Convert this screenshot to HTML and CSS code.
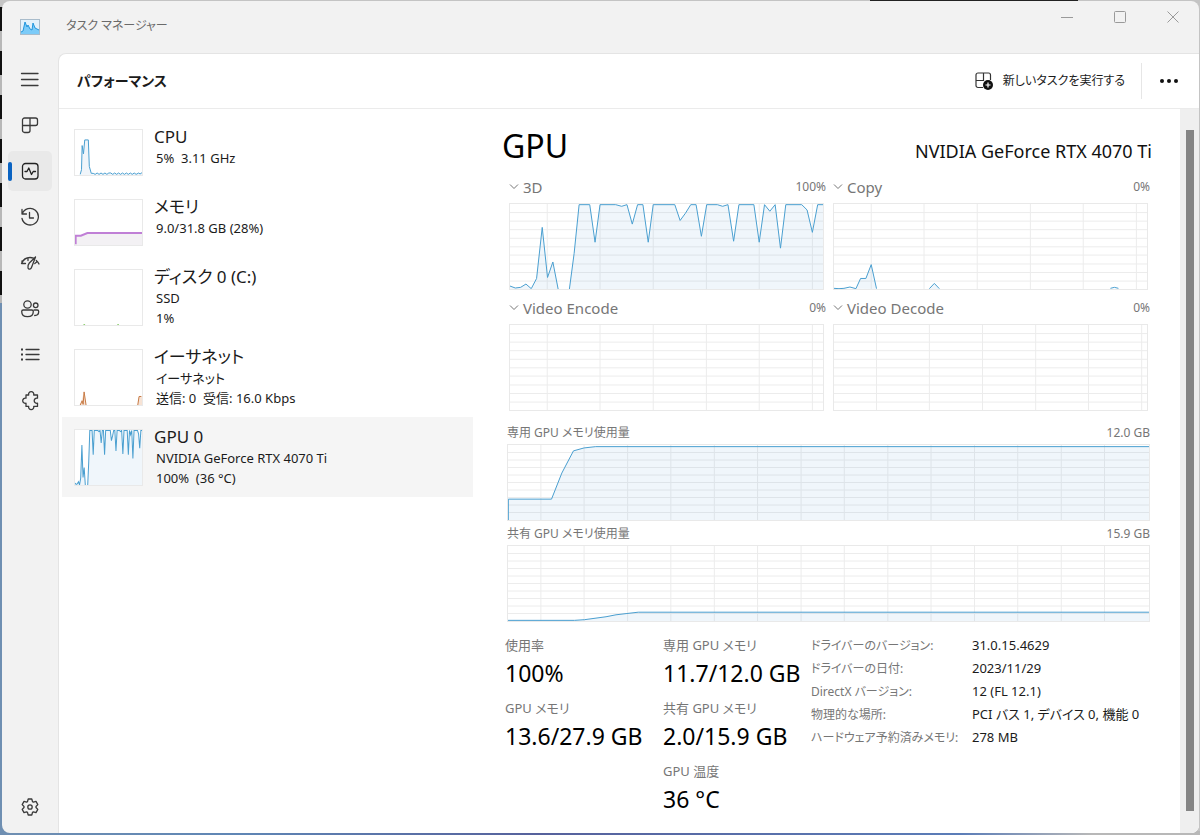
FILE: index.html
```html
<!DOCTYPE html>
<html lang="ja">
<head>
<meta charset="utf-8">
<meta name="viewport" content="width=device-width, initial-scale=1">
<title>タスク マネージャー</title>
<link rel="stylesheet" href="styles.css">
</head>
<body>
<div class="window">
  <header class="titlebar">
    <svg class="app-icon" viewBox="0 0 20 16" aria-hidden="true">
      <rect x="0.5" y="0.5" width="19" height="15" fill="#e3f1fb" stroke="#a9bccb"/>
      <path d="M1 13L3 12L5 3L7 8L8 6L10 10L12 11L13 4L15 9L17 10L19 11V15H1Z" fill="#7ccbf8"/>
      <path d="M1 13L3 12L5 3L7 8L8 6L10 10L12 11L13 4L15 9L17 10L19 11" fill="none" stroke="#2196dd"/>
    </svg>
    <h1 class="app-title">タスク マネージャー</h1>
    <div class="window-buttons">
      <button type="button" class="window-button" aria-label="最小化"><svg viewBox="0 0 12 12"><path d="M0 6.5H12"/></svg></button>
      <button type="button" class="window-button" aria-label="最大化"><svg viewBox="0 0 12 12"><rect x="0.5" y="0.5" width="11" height="11" rx="1"/></svg></button>
      <button type="button" class="window-button" aria-label="閉じる"><svg viewBox="0 0 12 12"><path d="M0.5 0.5L11.5 11.5M11.5 0.5L0.5 11.5"/></svg></button>
    </div>
  </header>

  <div class="body">
    <nav class="rail" aria-label="ページ">
      <button type="button" class="rail-button" aria-label="メニュー"><svg viewBox="0 0 20 20"><path d="M1.5 4.5H18M1.5 10.5H18M1.5 16.5H18"/></svg></button>
      <button type="button" class="rail-button" aria-label="プロセス"><svg viewBox="0 0 20 20"><path d="M4.500 3H15.500a2 2 0 0 1 2 2V8.500a2 2 0 0 1-2 2H10V15.500a2 2 0 0 1-2 2H4.500a2 2 0 0 1-2-2V5a2 2 0 0 1 2-2zM10 3V10.500H2.500"/></svg></button>
      <button type="button" class="rail-button selected" aria-label="パフォーマンス" aria-current="page"><svg viewBox="0 0 20 20"><rect x="2.500" y="2.500" width="15.500" height="15.500" rx="3"/><path d="M5 10.500H7L8.800 7L11.500 13.500L13.200 10.500H15.500"/></svg></button>
      <button type="button" class="rail-button" aria-label="アプリの履歴"><svg viewBox="0 0 20 20"><path d="M2 2.500V7H6.500M2.300 6.800A8.300 8.300 0 1 1 2 11.500M9.500 5.500V11H13.500"/></svg></button>
      <button type="button" class="rail-button" aria-label="スタートアップ アプリ"><svg viewBox="0 0 20 20"><path d="M1.500 10.500C3 7 6 4.500 10 4.500C11.500 4.500 12.500 4.800 13.500 5.200M2 8V10.500H5.500M8 4.800V7.500M16.300 7.500C17.500 8.500 18.300 9.500 19 11M14.800 10.500L17 8.800"/><path d="M15.500 4L9.300 10C8 11.500 7.800 13.500 8 15C8.800 17 11 16.300 11.600 14.300L15.500 4"/></svg></button>
      <button type="button" class="rail-button" aria-label="ユーザー"><svg viewBox="0 0 20 20"><circle cx="7.500" cy="5.500" r="3.700"/><circle cx="15.700" cy="6.300" r="2.300"/><path d="M3.200 11H11.800a1.500 1.500 0 0 1 1.500 1.500c0 3.200-2.400 5.200-5.800 5.200S1.700 15.700 1.700 12.500a1.500 1.500 0 0 1 1.500-1.500zM14.200 11h3a1.500 1.500 0 0 1 1.500 1.500c0 2.500-1.400 4-4 4"/></svg></button>
      <button type="button" class="rail-button" aria-label="詳細"><svg viewBox="0 0 20 20"><path d="M6 4.500H19M6 9.500H19M6 14.500H19"/><path class="thick" d="M1 4.500H3M1 9.500H3M1 14.500H3"/></svg></button>
      <button type="button" class="rail-button" aria-label="サービス"><svg viewBox="0 0 20 20"><path d="M6 4H8.700a2.600 2.600 0 1 1 5 0H17.500V7.200a2.600 2.600 0 1 0 0 5V15.400H13.700a2.600 2.600 0 1 1-5 0H6V12.200a2.600 2.600 0 1 1 0-5z"/></svg></button>
      <button type="button" class="rail-button settings" aria-label="設定"><svg viewBox="0 0 20 20"><path d="M8.200 2H11.800L12.500 4.600L13.400 5.100L16 4.400L17.800 7.600L16 9.500V10.500L17.800 12.400L16 15.600L13.400 14.900L12.500 15.400L11.800 18H8.200L7.500 15.400L6.600 14.900L4 15.600L2.200 12.400L4 10.500V9.500L2.200 7.600L4 4.400L6.600 5.100L7.500 4.600Z"/><circle cx="10" cy="10" r="2.200"/></svg></button>
    </nav>

    <main class="panel">
      <div class="toolbar">
        <h2 class="page-title">パフォーマンス</h2>
        <button type="button" class="run-task">
          <svg viewBox="0 0 20 20" aria-hidden="true"><path d="M9 16.500H4a2 2 0 0 1-2-2V4a2 2 0 0 1 2-2H14.500a2 2 0 0 1 2 2V9M2 9.500H9.500V2"/><circle class="solid" cx="14" cy="14" r="5"/><path class="plus" d="M14 11.500V16.500M11.500 14H16.500"/></svg>
          <span>新しいタスクを実行する</span>
        </button>
        <button type="button" class="more" aria-label="その他"><svg viewBox="0 0 20 6" aria-hidden="true"><circle cx="3" cy="3" r="2"/><circle cx="10" cy="3" r="2"/><circle cx="17" cy="3" r="2"/></svg></button>
      </div>

      <div class="content">
        <div class="resources">
          <button type="button" class="resource">
            <svg class="thumb short blue" viewBox="0 0 206 136" preserveAspectRatio="none" aria-hidden="true"><path class="area" d="M16 136L20 120L22 47L26 72L30 30H41L44 110L50 134L206 132V136Z"/><path class="line" d="M16 134L20 120L22 47L26 72L30 30H41L44 110L50 131L56 131L62 134L68 130L74 134L80 130L86 134L92 130L98 134L104 130L110 130L116 134L122 130L128 134L134 130L140 134L146 130L152 134L158 130L164 134L170 130L176 134L182 130L188 134L196 130L200 133L206 129"/></svg>
            <span class="resource-text"><span class="resource-name">CPU</span><span class="resource-info">5%&nbsp; 3.11 GHz</span></span>
          </button>
          <button type="button" class="resource">
            <svg class="thumb short purple" viewBox="0 0 206 136" preserveAspectRatio="none" aria-hidden="true"><path class="area" d="M1 136V108H18L38 100H206V136Z"/><path class="line" d="M2 134V108H18L38 100H206"/></svg>
            <span class="resource-text"><span class="resource-name">メモリ</span><span class="resource-info">9.0/31.8 GB (28%)</span></span>
          </button>
          <button type="button" class="resource">
            <svg class="thumb green" viewBox="0 0 206 168" preserveAspectRatio="none" aria-hidden="true"><path class="line" d="M26 167H31M130 167H135"/></svg>
            <span class="resource-text"><span class="resource-name">ディスク 0 (C:)</span><span class="resource-info">SSD</span><span class="resource-info">1%</span></span>
          </button>
          <button type="button" class="resource">
            <svg class="thumb orange" viewBox="0 0 206 168" preserveAspectRatio="none" aria-hidden="true"><path class="area" d="M16 168L28 128L34 168ZM193 168L197 142H206V168Z"/><path class="line" d="M16 168L22 155L25 166L28 128L34 168M193 168L197 142H204"/></svg>
            <span class="resource-text"><span class="resource-name">イーサネット</span><span class="resource-info">イーサネット</span><span class="resource-info">送信: 0&nbsp; 受信: 16.0 Kbps</span></span>
          </button>
          <button type="button" class="resource selected" aria-pressed="true">
            <svg class="thumb blue" viewBox="0 0 942 258" preserveAspectRatio="none" aria-hidden="true"><use href="#gpu-area"/><use href="#gpu-line"/></svg>
            <span class="resource-text"><span class="resource-name">GPU 0</span><span class="resource-info">NVIDIA GeForce RTX 4070 Ti</span><span class="resource-info">100%&nbsp; (36 °C)</span></span>
          </button>
        </div>

        <section class="details" aria-label="GPU 0">
          <div class="details-head">
            <h2 class="details-title">GPU</h2>
            <p class="device">NVIDIA GeForce RTX 4070 Ti</p>
          </div>

          <div class="engines">
            <div class="engine">
              <div class="engine-head"><button type="button" class="engine-name"><svg viewBox="0 0 10 10" aria-hidden="true"><path d="M1 2.500L5 6.500L9 2.500"/></svg>3D</button><span>100%</span></div>
              <svg class="chart blue" viewBox="0 0 942 258" preserveAspectRatio="none" role="img" aria-label="3D">
                <path id="engine-rows" class="grid" d="M0 26H942M0 52H942M0 78H942M0 104H942M0 130H942M0 155H942M0 182H942M0 208H942M0 234H942"/>
                <path id="engine-cols" class="grid" d="M112 0V258M271 0V258M431 0V258M591 0V258M750 0V258M910 0V258"/>
                <path id="gpu-area" class="area" d="M0 258V249L16 255L32 253L48 243L64 257L80 226L97 71L113 223L129 176L146 260H178L193 150L208 2H240L256 116L271 2H318L336 7L352 2L368 61L384 2H400L416 116L431 2H496L512 50L528 28L544 2H560L576 98L592 2H624L640 7L656 2L673 113L689 2H734L750 116L766 2L782 22L798 2L814 134L830 2H878L894 18L910 86L926 2H942V258Z"/>
                <path id="gpu-line" class="line" d="M0 249L16 255L32 253L48 243L64 257L80 226L97 71L113 223L129 176L146 264H178L193 150L208 2H240L256 116L271 2H318L336 7L352 2L368 61L384 2H400L416 116L431 2H496L512 50L528 28L544 2H560L576 98L592 2H624L640 7L656 2L673 113L689 2H734L750 116L766 2L782 22L798 2L814 134L830 2H878L894 18L910 86L926 2H942"/>
              </svg>
            </div>
            <div class="engine">
              <div class="engine-head"><button type="button" class="engine-name"><svg viewBox="0 0 10 10" aria-hidden="true"><path d="M1 2.500L5 6.500L9 2.500"/></svg>Copy</button><span>0%</span></div>
              <svg class="chart blue" viewBox="0 0 942 258" preserveAspectRatio="none" role="img" aria-label="Copy">
                <use href="#engine-rows"/><use href="#engine-cols"/>
                <path class="area" d="M66 257L80 226H96L112 184L128 258ZM287 258L302 241L317 258Z"/>
                <path class="line" d="M0 256L15 257L30 256L48 252L66 257L80 226H96L112 184L128 257M287 257L302 241L317 257M832 256L844 253L856 256"/>
              </svg>
            </div>
            <div class="engine">
              <div class="engine-head"><button type="button" class="engine-name"><svg viewBox="0 0 10 10" aria-hidden="true"><path d="M1 2.500L5 6.500L9 2.500"/></svg>Video Encode</button><span>0%</span></div>
              <svg class="chart blue" viewBox="0 0 942 258" preserveAspectRatio="none" role="img" aria-label="Video Encode"><use href="#engine-rows"/><use href="#engine-cols"/></svg>
            </div>
            <div class="engine">
              <div class="engine-head"><button type="button" class="engine-name"><svg viewBox="0 0 10 10" aria-hidden="true"><path d="M1 2.500L5 6.500L9 2.500"/></svg>Video Decode</button><span>0%</span></div>
              <svg class="chart blue" viewBox="0 0 942 258" preserveAspectRatio="none" role="img" aria-label="Video Decode"><use href="#engine-rows"/><use href="#engine-cols" x="16"/></svg>
            </div>
          </div>

          <div class="memory">
            <div class="memory-head"><span>専用 GPU メモリ使用量</span><span>12.0 GB</span></div>
            <svg class="chart wide blue" viewBox="0 0 1929 230" preserveAspectRatio="none" role="img" aria-label="専用 GPU メモリ使用量">
              <path id="memory-grid" class="grid" d="M0 23H1929M0 46H1929M0 69H1929M0 92H1929M0 115H1929M0 138H1929M0 161H1929M0 184H1929M0 207H1929M99 0V230M229 0V230M360 0V230M490 0V230M621 0V230M751 0V230M882 0V230M1012 0V230M1143 0V230M1273 0V230M1404 0V230M1534 0V230M1665 0V230M1795 0V230"/>
              <path class="area" d="M0 230V166H131L162 86L197 18L229 9L264 5H1929V230Z"/>
              <path class="line" d="M1 230V166H131L162 86L197 18L229 9L264 5H1929"/>
            </svg>
          </div>
          <div class="memory">
            <div class="memory-head"><span>共有 GPU メモリ使用量</span><span>15.9 GB</span></div>
            <svg class="chart wide blue" viewBox="0 0 1929 230" preserveAspectRatio="none" role="img" aria-label="共有 GPU メモリ使用量">
              <use href="#memory-grid"/>
              <path class="area" d="M0 230V228H200L230 226L295 217L325 211L358 207L392 203H1929V230Z"/>
              <path class="line" d="M0 228H200L230 226L295 217L325 211L358 207L392 203H1929"/>
            </svg>
          </div>

          <div class="numbers">
            <dl class="stats">
              <div class="stat"><dt>使用率</dt><dd>100%</dd></div>
              <div class="stat"><dt>GPU メモリ</dt><dd>13.6/27.9 GB</dd></div>
            </dl>
            <dl class="stats">
              <div class="stat"><dt>専用 GPU メモリ</dt><dd>11.7/12.0 GB</dd></div>
              <div class="stat"><dt>共有 GPU メモリ</dt><dd>2.0/15.9 GB</dd></div>
              <div class="stat"><dt>GPU 温度</dt><dd>36 °C</dd></div>
            </dl>
            <dl class="specs">
              <dt>ドライバーのバージョン:</dt><dd>31.0.15.4629</dd>
              <dt>ドライバーの日付:</dt><dd>2023/11/29</dd>
              <dt>DirectX バージョン:</dt><dd>12 (FL 12.1)</dd>
              <dt>物理的な場所:</dt><dd>PCI バス 1, デバイス 0, 機能 0</dd>
              <dt>ハードウェア予約済みメモリ:</dt><dd>278 MB</dd>
            </dl>
          </div>
        </section>

        <div class="scroll-track"><div class="scroll-thumb"></div></div>
      </div>
    </main>
  </div>
</div>
</body>
</html>
```
FILE: styles.css
```css
* { box-sizing: border-box; }

body {
  margin: 0;
  min-height: 100vh;
  display: flex;
  padding: 1px 1px 2px 2px;
  font: 13px/20px "Noto Sans", "Noto Sans CJK JP", sans-serif;
  font-feature-settings: "palt";
  color: #1b1b1b;
  background:
    linear-gradient(#222, #222) 870px 0 / 208px 1px no-repeat,
    linear-gradient(90deg, #6f8fb2, #5f86b5 20%, #56619c 45%, #5b7db8 80%, #b8b8b8 91%) 0 100% / 100% 4px no-repeat,
    linear-gradient(#6f8fb2, #6f8fb2) 0 303px / 8px 100% no-repeat,
    repeating-linear-gradient(#111 0 24px, #b8b8b8 24px 44px) 0 7px / 8px 100% no-repeat,
    #c4c4c4;
}

h1, h2, p, dl, dd { margin: 0; font-weight: 400; }

button {
  border: 0;
  padding: 0;
  background: none;
  font: inherit;
  font-feature-settings: inherit;
  color: inherit;
  text-align: left;
}

svg { display: block; fill: none; stroke: currentColor; }

.window {
  flex: 1;
  display: flex;
  flex-direction: column;
  overflow: hidden;
  border-radius: 8px;
  background: #f2f2f2;
}

.titlebar { display: flex; height: 52px; }
.app-icon { width: 20px; height: 16px; margin: 18px 26px 0 18px; stroke: none; }
.app-title { flex: 1; padding-top: 15px; font-size: 12px; color: #6a6a6a; }
.window-buttons { display: flex; height: 32px; }
.window-button { display: grid; place-items: center; width: 53px; color: #9a9a9a; }
.window-button svg { width: 12px; height: 12px; }

.body { flex: 1; display: flex; }

.rail {
  display: flex;
  flex-direction: column;
  gap: 6px;
  width: 56px;
  padding: 6px 6px 6px 6px;
}
.rail-button {
  display: grid;
  place-items: center;
  height: 40px;
  border-radius: 5px;
  color: #3a3a3a;
}
.rail-button svg { width: 20px; height: 20px; stroke-width: 1.3; stroke-linejoin: round; stroke-linecap: round; }
.rail-button .thick { stroke-width: 2; stroke-linecap: butt; }
.rail-button.selected { position: relative; background: #e9e9e9; color: #222; }
.rail-button.selected::before {
  content: "";
  position: absolute;
  left: 0;
  top: 11px;
  width: 4px;
  height: 19px;
  border-radius: 2px;
  background: #0a63c2;
}
.rail-button.settings { margin-top: auto; }

.panel {
  flex: 1;
  display: flex;
  flex-direction: column;
  min-width: 0;
  border: 1px solid #e4e4e4;
  border-width: 1px 0 0 1px;
  border-radius: 8px 0 0 0;
  background: #fff;
  overflow: hidden;
}

.toolbar {
  display: flex;
  align-items: center;
  height: 55px;
  padding: 0 20px 0 18px;
  border-bottom: 1px solid #ebebeb;
}
.page-title { flex: 1; font-size: 14px; font-weight: 700; }
.run-task { display: flex; align-items: center; gap: 9px; padding-right: 16px; font-size: 12px; }
.run-task svg { width: 20px; height: 20px; stroke: #333; stroke-width: 1.2; }
.run-task .solid { fill: #111; stroke: none; }
.run-task .plus { stroke: #fff; }
.more { display: grid; align-items: center; height: 36px; padding-left: 17px; border-left: 1px solid #e6e6e6; }
.more svg { width: 20px; height: 6px; fill: #111; stroke: none; }

.content { flex: 1; display: flex; }

.resources {
  flex: 0 1 443px;
  padding: 8px 29px 0 3px;
}
.resource {
  display: flex;
  gap: 11px;
  width: 100%;
  min-height: 70px;
  padding: 9px 12px;
}
.resource.selected { background: #f5f5f5; }
.thumb { flex: none; width: 69px; height: 57px; margin-top: 3px; border: 1px solid #e9e9e9; background: #fff; }
.thumb.short { height: 47px; }
.resource-text { display: flex; flex-direction: column; }
.resource-name { font-size: 17px; line-height: 22px; }
.resource-info { line-height: 20px; padding-left: 2px; }

.line, .grid { vector-effect: non-scaling-stroke; fill: none; }
.grid { stroke: #ececec; stroke-width: 1; }
.area { stroke: none; }
.blue .line { stroke: #4a9fd0; }
.area { fill: #f0f5fa; }
.chart .area { fill: #3b8ac8; fill-opacity: 0.08; }
.purple .line { stroke: #c07fd6; stroke-width: 2; }
.purple .area { fill: #f3f1f4; }
.green .line { stroke: #7cc85a; }
.orange .line { stroke: #c77a45; }
.orange .area { fill: #f7e3d5; }

.details { flex: 1; min-width: 0; padding: 13px 28px 8px 0; }
.details-head { display: flex; justify-content: space-between; align-items: baseline; height: 55px; }
.details-title { font-size: 32px; line-height: 48px; color: #000; }
.device { font-size: 18px; color: #111; }

.engines {
  display: grid;
  grid-template-columns: 1fr 1fr;
  gap: 8px 7px;
  padding: 0 2px 0 7px;
}
.engine-head { display: flex; justify-content: space-between; margin-bottom: 6px; font-size: 12px; color: #767676; }
.engine-name { display: flex; align-items: center; gap: 4px; font-size: 15px; }
.engine-name svg { width: 10px; height: 10px; }
.chart { width: 100%; height: 77px; border: 1px solid #e9e9e9; }
.engine .chart { width: calc(100% - 2px); height: 87px; }

.memory { padding: 0 2px 0 5px; margin-top: 4px; }
.engines + .memory { margin-top: 13px; }
.memory-head { display: flex; justify-content: space-between; margin-bottom: 2px; font-size: 12px; line-height: 18px; color: #767676; }

.numbers {
  display: grid;
  grid-template-columns: 158px 148px 1fr;
  margin-top: 12px;
  padding-left: 3px;
}
.stats { display: flex; flex-direction: column; gap: 6px; white-space: nowrap; }
.stat dt { line-height: 22px; color: #767676; }
.stat dd { font-size: 23px; line-height: 35px; color: #000; }
.specs { display: grid; grid-template-columns: 161px 1fr; align-content: start; line-height: 23px; white-space: nowrap; }
.specs dt { font-size: 12px; color: #767676; }

.scroll-track { display: flex; width: 19px; padding: 21px 5px 22px 6px; background: #efefef; }
.scroll-thumb { flex: 1; background: #858585; }
```
